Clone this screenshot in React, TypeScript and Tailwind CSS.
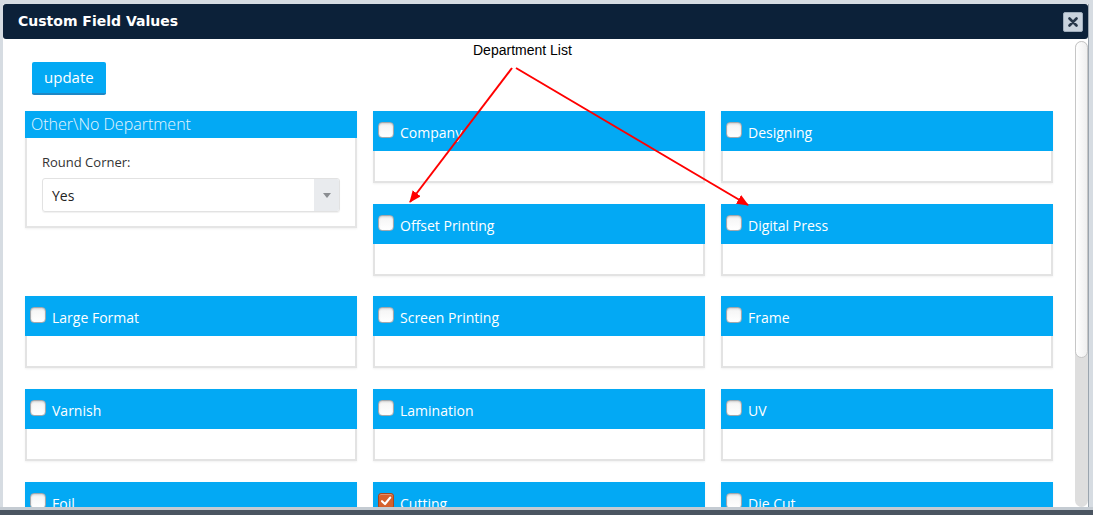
import React from "react";

const OPEN = "font-['Open_Sans','Noto_Sans',sans-serif]";

interface DeptProps {
  name: string;
  checked?: boolean;
}

function Checkbox({ checked }: { checked?: boolean }) {
  if (checked) {
    return (
      <span className="flex items-center justify-center w-[16px] h-[16px] shrink-0 rounded-[3px] border border-[#a9461d] bg-[#d5612d] shadow-[inset_0_1px_0_rgba(255,255,255,0.3)]">
        <svg width="12" height="12" viewBox="0 0 12 12">
          <path d="M2 6.2 L5 9 L10.2 2.6" fill="none" stroke="#fff" strokeWidth="2.2" strokeLinecap="round" strokeLinejoin="round" />
        </svg>
      </span>
    );
  }
  return (
    <span className="block w-[16px] h-[16px] shrink-0 rounded-[4px] border border-[#a3a8ad] bg-gradient-to-b from-[#f4f4f4] to-white shadow-[inset_0_1px_2px_rgba(0,0,0,0.15)]" />
  );
}

function DeptCard({ name, checked }: DeptProps) {
  return (
    <div className="shadow-[0_1px_2px_rgba(0,0,0,0.06)]">
      <div className="h-[40px] bg-[#03a9f4] flex items-start gap-[6px] pl-[5px] pt-[11px]">
        <Checkbox checked={checked} />
        <span className={`${OPEN} text-[14px] leading-[20px] mt-[1px] text-white`}>{name}</span>
      </div>
      <div className="h-[32px] bg-white border-2 border-t-0 border-[#e3e3e3]" />
    </div>
  );
}

function OtherCard() {
  return (
    <div className="shadow-[0_1px_2px_rgba(0,0,0,0.06)]">
      <div className={`h-[27px] bg-[#03a9f4] pl-[6px] ${OPEN} font-light text-[16px] leading-[27px] text-[#e6f6fe]`}>
        Other\No Department
      </div>
      <div className="h-[90px] bg-white border-2 border-t-0 border-[#e5e5e5] px-[15px] pt-[15px]">
        <div className={`${OPEN} text-[13px] leading-[18px] text-[#333]`}>Round Corner:</div>
        <div className="mt-[7px] h-[34px] flex rounded-[3px] border border-[#e2e2e2] shadow-[0_1px_1px_rgba(0,0,0,0.06)] overflow-hidden">
          <div className={`flex-1 flex items-center pl-[9px] ${OPEN} text-[14px] text-[#222]`}>Yes</div>
          <div className="w-[25px] bg-[#e9ebee] flex items-center justify-center">
            <svg width="8" height="5" viewBox="0 0 8 5">
              <path d="M0 0 L8 0 L4 5 Z" fill="#8a8d91" />
            </svg>
          </div>
        </div>
      </div>
    </div>
  );
}

export default function App() {
  const rows: DeptProps[] = [
    { name: "Large Format" },
    { name: "Screen Printing" },
    { name: "Frame" },
    { name: "Varnish" },
    { name: "Lamination" },
    { name: "UV" },
    { name: "Foil" },
    { name: "Cutting", checked: true },
    { name: "Die Cut" },
  ];

  return (
    <div className="relative w-[1093px] h-[515px] overflow-hidden bg-[#d6dce2] flex flex-col">
      <div className="flex-1 min-h-0 pt-[4px] pl-[3px] pr-[4px] flex flex-col">
        <div className="flex-1 min-h-0 flex flex-col bg-white border-r border-[#9aa4ae]">
          {/* Title bar */}
          <div className="h-[35px] shrink-0 bg-[#0c2139] rounded-[3px] flex items-center justify-between pl-[15px] pr-[5px]">
            <span className="font-['DejaVu_Sans',sans-serif] font-bold text-[14px] text-white">Custom Field Values</span>
            <button className="w-[20px] h-[20px] mt-[1px] rounded-[2px] border border-[#9fadbc] bg-[#c9d3de] flex items-center justify-center">
              <svg width="10" height="10" viewBox="0 0 10 10">
                <path d="M1.5 1.5 L8.5 8.5 M8.5 1.5 L1.5 8.5" stroke="#27374a" strokeWidth="2.6" strokeLinecap="round" />
              </svg>
            </button>
          </div>

          {/* Body */}
          <div className="flex-1 min-h-0 flex">
            <div className="w-[1072px] overflow-hidden pl-[22px] pt-[23px]">
              <div className="pl-[7px]">
                <button className={`h-[33px] px-[12px] rounded-[2px] bg-[#03a9f4] border-b-2 border-[#1f87c4] ${OPEN} text-[15px] text-white leading-[31px]`}>
                  update
                </button>
              </div>

              <div className="mt-[16px] w-[1028px] grid grid-cols-3 gap-x-4 items-start">
                <OtherCard />
                <div className="flex flex-col gap-[21px]">
                  <DeptCard name="Company" />
                  <DeptCard name="Offset Printing" />
                </div>
                <div className="flex flex-col gap-[21px]">
                  <DeptCard name="Designing" />
                  <DeptCard name="Digital Press" />
                </div>
              </div>

              <div className="mt-[20px] w-[1028px] grid grid-cols-3 gap-x-4 gap-y-[21px]">
                {rows.map((r) => (
                  <DeptCard key={r.name} name={r.name} checked={r.checked} />
                ))}
              </div>
            </div>

            {/* Scrollbar */}
            <div className="w-[13px] pt-[2px]">
              <div className="h-full rounded-[7px] bg-[#dedede]">
                <div className="h-[317px] rounded-[7px] border border-[#c6c6c6] bg-gradient-to-r from-white to-[#efefef]" />
              </div>
            </div>
          </div>
        </div>
      </div>
      <div className="h-[3px] shrink-0 bg-[#c4cbd2]" />
      <div className="h-[5px] shrink-0 bg-[#4a5561]" />

      {/* Annotation */}
      <div className="absolute left-[473px] top-[42px] font-['Liberation_Sans',Arial,sans-serif] text-[14px] leading-[16px] text-black">
        Department List
      </div>
      <svg className="absolute inset-0 pointer-events-none" width="1093" height="515">
        <defs>
          <marker id="ah" markerWidth="12" markerHeight="10" refX="11" refY="5" orient="auto" markerUnits="userSpaceOnUse">
            <path d="M0 0 L12 5 L0 10 Z" fill="#ff0000" />
          </marker>
        </defs>
        <line x1="512" y1="68" x2="410" y2="202" stroke="#ff0000" strokeWidth="2" markerEnd="url(#ah)" />
        <line x1="516" y1="68" x2="748" y2="205" stroke="#ff0000" strokeWidth="2" markerEnd="url(#ah)" />
      </svg>
    </div>
  );
}
